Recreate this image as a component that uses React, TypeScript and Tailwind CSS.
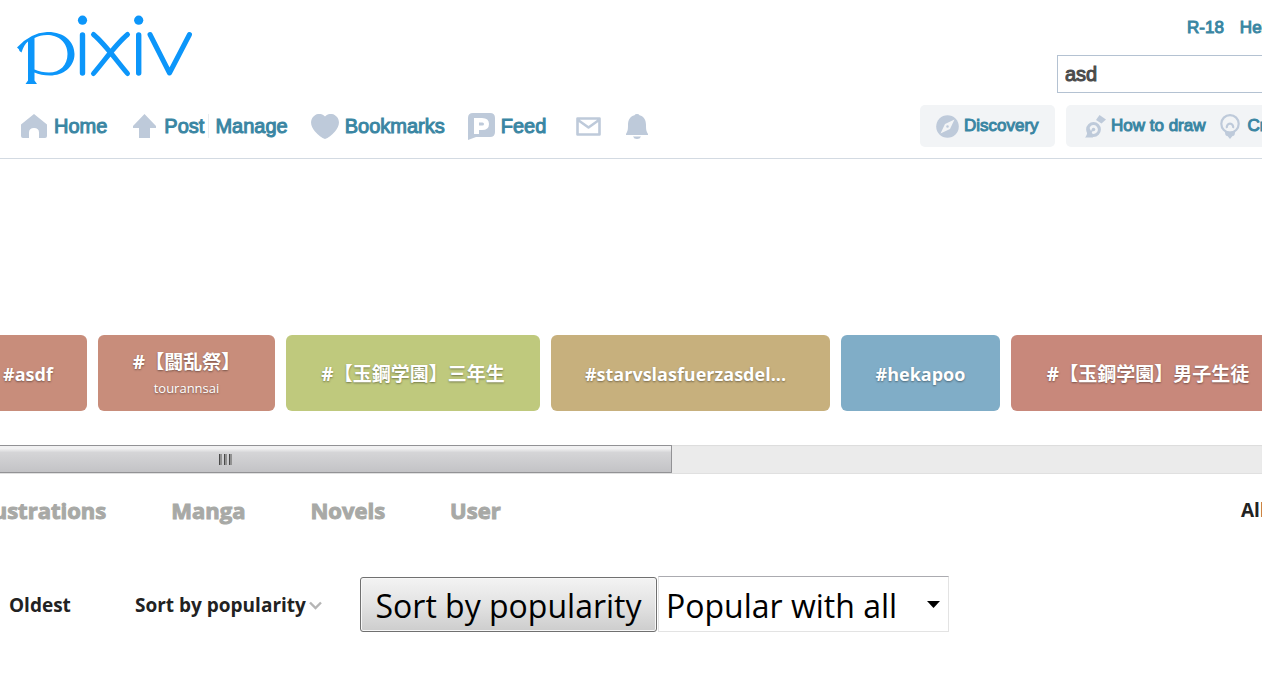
import { type ReactNode } from "react";

const uiFont = "font-['Liberation_Sans',Arial,sans-serif]";
const navLink = "flex items-center whitespace-nowrap text-[#3a86a3] [-webkit-text-stroke:1px_currentColor]";

const tags = [
  { label: "#asdf", box: "w-[118px] bg-[#c88d7b] text-[18px]" },
  { label: "#【闘乱祭】", sub: "tourannsai", box: "w-[177px] bg-[#c88d7b] text-[19px]" },
  { label: "#【玉鋼学園】三年生", box: "w-[254px] bg-[#bfc97d] text-[19px]" },
  { label: "#starvslasfuerzasdel...", box: "w-[279px] bg-[#c7b07d] pr-[10px] text-[18px]" },
  { label: "#hekapoo", box: "w-[159px] bg-[#80adc7] text-[18px]" },
  { label: "#【玉鋼学園】男子生徒", box: "w-[274px] bg-[#c8887b] text-[19px]" },
];

function Logo() {
  return (
    <svg className="block" width="176" height="70" viewBox="17 15 176 70" role="img" aria-label="pixiv">
      <g fill="#0c96fa" fillRule="evenodd">
        <path d="M17 47.500Q30 33 47 32C63 31.500 74.500 41 74.500 54C74.500 67 63 75.500 50 75.500C44 75.500 38.500 74.500 34.500 72.500V80.500L37 84H25.500L28 80.500V41.500Q24 44.500 21.500 52.500L19.500 51Q19.500 49 17 47.500ZM34.500 38V69.500Q41 72.500 49 72.500C60 72.500 67.500 65 67.500 54C67.500 42 58 35 47 35Q40 35 34.500 38Z" />
        <circle cx="82.500" cy="20.200" r="4.600" />
        <circle cx="138.700" cy="20.200" r="4.600" />
      </g>
      <g fill="none" stroke="#0c96fa" strokeWidth="5.400" strokeLinecap="round" strokeLinejoin="round">
        <path d="M82.500 35V73M138.700 35V73" />
        <path strokeWidth="5" d="M93.500 34.500C105 44 116 60 127.500 73.500M127.500 34.500C116 44 105 60 93.500 73.500" />
        <path strokeWidth="5" d="M150 34.500L169.500 73L189.500 34.500" />
      </g>
    </svg>
  );
}

function Icon({ w, h, children }: { w: number; h: number; children: ReactNode }) {
  return (
    <svg className="block shrink-0" width={w} height={h} viewBox={`0 0 ${w} ${h}`} fill="#becada" aria-hidden="true">
      {children}
    </svg>
  );
}

function Header() {
  return (
    <header className={`${uiFont} overflow-hidden border-b border-[#d3dae2] pb-[11px]`}>
      <div className="flex h-[105px] justify-between">
        <a href="#home" className="pt-[15px] pl-[17px]"><Logo /></a>
        <div className="w-[205px] shrink-0 pt-[17px]">
          <div className="flex gap-4 pl-[130px] text-[17px] leading-[22px]">
            <a href="#r18" className={navLink}>R-18</a>
            <a href="#help" className={navLink}>Help</a>
          </div>
          <input
            aria-label="Search"
            defaultValue="asd"
            className="mt-4 block h-[38px] w-[300px] border border-[#b4c2d2] bg-white px-[7px] text-[20px] text-[#4b4b4b] outline-none [-webkit-text-stroke:1px_currentColor]"
          />
        </div>
      </div>
      <div className="flex h-[42px] items-center justify-between">
        <nav aria-label="Main" className="flex items-center pl-[21px] text-[20px] leading-6">
          <a href="#home" className={`${navLink} mr-[26px] gap-[7px]`}>
            <Icon w={26} h={24}><path d="M13 0L26 10.500V22Q26 24 24 24H18V18.500Q18 14 13 14T8 18.500V24H2Q0 24 0 22V10.500Z" /></Icon>
            Home
          </a>
          <a href="#post" className={`${navLink} mr-1 gap-2`}>
            <Icon w={23} h={24}><path d="M11.500 0L23 12V14H17V24H6V14H0V12Z" /></Icon>
            Post
          </a>
          <a href="#manage" className={`${navLink} mr-[23px] border-l border-[#e9edf1] pl-[6px]`}>Manage</a>
          <a href="#bookmarks" className={`${navLink} mr-[23px] gap-[6px]`}>
            <Icon w={28} h={25}><path d="M14 2.500C18-1.500 23-.500 26 3C29.500 7.500 28 13 24 17.500C21 21 17 24 14 25C11 24 7 21 4 17.500C0 13-1.500 7.500 2 3C5-.500 10-1.500 14 2.500Z" /></Icon>
            Bookmarks
          </a>
          <a href="#feed" className={`${navLink} mr-[30px] gap-[6px]`}>
            <Icon w={27} h={28}>
              <path fillRule="evenodd" d="M5 1H22Q27 1 27 6V20Q27 25 22 25H8L0 28V6Q0 1 5 1ZM6 6V22H11V18H14Q21 18 21 12T14 6ZM11 10.500H14.500Q16 10.500 16 12T14.500 13.500H11Z" />
            </Icon>
            Feed
          </a>
          <a href="#messages" aria-label="Messages" className="mr-[25px]">
            <Icon w={25} h={19}>
              <path fill="none" stroke="#becada" strokeWidth="2.600" strokeLinejoin="round" d="M1.500 1.500H23.500V17.500H1.500ZM2 3L12.500 10.500L23 3" />
            </Icon>
          </a>
          <a href="#notifications" aria-label="Notifications">
            <Icon w={22} h={25}>
              <path d="M11 0Q13 0 13.500 1.300C18 2.500 20 6 20 11C20 16 20.500 17.500 22 20V21H0V20C1.500 17.500 2 16 2 11C2 6 4 2.500 8.500 1.300Q9 0 11 0ZM7 22.500H15Q14 25 11 25T7 22.500Z" />
            </Icon>
          </a>
        </nav>
        <div className="flex w-[342px] shrink-0 gap-[11px] text-[17px] leading-6 whitespace-nowrap">
          <a href="#discovery" className={`${navLink} h-[42px] w-[135px] shrink-0 gap-[5px] rounded-[5px] bg-[#f2f4f6] pl-4`}>
            <Icon w={23} h={23}>
              <circle cx="11.500" cy="11.500" r="11.300" />
              <path fill="#f2f4f6" fillRule="evenodd" d="M18.500 4.500L14 14L4.500 18.500L9 9ZM11.500 10.200A1.300 1.300 0 1 0 11.500 12.800A1.300 1.300 0 1 0 11.500 10.200Z" />
            </Icon>
            Discovery
          </a>
          <div className="flex h-[42px] w-[300px] shrink-0 gap-[15px] rounded-[5px] bg-[#f2f4f6] pl-[19px]">
            <a href="#how-to-draw" className={`${navLink} gap-[5px]`}>
              <Icon w={21} h={23}>
                <path d="M14.500 0L21 4.500L16.500 8.500L11 5Z" />
                <path d="M4 12C1.500 16 3 20 0 22.500H8L7 18Z" />
                <circle cx="8.500" cy="14.500" r="5.900" fill="none" stroke="#becada" strokeWidth="3" />
                <circle cx="8.500" cy="14.500" r="1.800" />
                <path d="M4 19.500L8 14.500" stroke="#becada" strokeWidth="1.500" />
              </Icon>
              How to draw
            </a>
            <a href="#creators" className={`${navLink} gap-[7px]`}>
              <Icon w={20} h={25}>
                <circle cx="10" cy="9.800" r="8.700" fill="none" stroke="#becada" strokeWidth="2.200" />
                <path fill="none" stroke="#becada" strokeWidth="2.200" d="M7 14A3.200 3.200 0 1 1 13 14" />
                <path d="M4.500 16.500Q10 19 15.500 16.500L14.500 21Q14 22 12.500 22L10 25L7.500 22Q6 22 5.500 21Z" />
              </Icon>
              Creators
            </a>
          </div>
        </div>
      </div>
    </header>
  );
}

function ScrollBar() {
  return (
    <div className="mt-[34px] flex h-[29px] border-b border-[#e0e0e0] bg-[#ebebeb] shadow-[inset_0_1px_1px_#dcdcdc]">
      <div className="flex w-[672px] items-center rounded-r-[1px] border border-l-0 border-[#929295] bg-linear-to-b from-[#f1f1f2] from-10% via-[#d5d5d7] via-25% to-[#c3c3c6]">
        <div className="ml-[219px] flex gap-[2px]">
          <span className="h-[11px] w-[3px] border-l border-[#4a4a4a] bg-[#929292]" />
          <span className="h-[11px] w-[3px] border-l border-[#4a4a4a] bg-[#929292]" />
          <span className="h-[11px] w-[3px] border-l border-[#4a4a4a] bg-[#929292]" />
        </div>
      </div>
    </div>
  );
}

export default function App() {
  return (
    <div className="overflow-hidden bg-white pb-12 font-['Open_Sans','Noto_Sans_CJK_JP',sans-serif]">
      <Header />
      <main className="pt-44">
        <div className="-ml-[31px] flex gap-[11px] text-white">
          {tags.map((tag) => (
            <a
              key={tag.label}
              href="#tag"
              className={`${tag.box} flex h-[76px] shrink-0 flex-col items-center justify-center rounded-[6px] pt-[2px] whitespace-nowrap [text-shadow:0_1px_2px_rgba(0,0,0,0.4)]`}
            >
              <span className="leading-7 font-bold">{tag.label}</span>
              {tag.sub && <span className="text-[13px] leading-6">{tag.sub}</span>}
            </a>
          ))}
        </div>
        <ScrollBar />
        <div className="flex justify-between pt-5 leading-8 font-bold whitespace-nowrap">
          <nav aria-label="Categories" className="-ml-7 flex gap-[65px] text-[22px] text-[#a8a9a6] [-webkit-text-stroke:1px_currentColor]">
            <a href="#illustrations">Illustrations</a>
            <a href="#manga">Manga</a>
            <a href="#novels">Novels</a>
            <a href="#user">User</a>
          </nav>
          <a href="#all" className="w-[21px] shrink-0 text-[19px] text-[#222]">All</a>
        </div>
        <div className="mt-[50px] flex items-center pl-[9px] whitespace-nowrap text-[#222]">
          <a href="#oldest" className="w-[126px] pt-[2px] text-[19px] font-bold">Oldest</a>
          <button type="button" className="flex w-[225px] items-center gap-[3px] pt-[2px] text-[19px] font-bold">
            Sort by popularity
            <svg width="13" height="9" viewBox="0 0 13 9" fill="none" stroke="#b5b5b5" strokeWidth="2.400" aria-hidden="true">
              <path d="M1 1.500L6.500 7L12 1.500" />
            </svg>
          </button>
          <button type="button" className="mr-px h-[55px] w-[297px] rounded-[3px] border border-[#707070] bg-linear-to-b from-[#f3f3f3] via-[#e3e3e3] to-[#cdcdcd] pt-[2px] text-[32px] leading-[51px] text-black shadow-[inset_0_0_0_1px_#f7f7f7]">
            Sort by popularity
          </button>
          <div className="relative w-[291px]">
            <select aria-label="Popularity filter" className="block h-14 w-full appearance-none border border-[#e3e3e3] border-t-[#ababb0] bg-white pt-[3px] pl-[7px] text-[32px] text-black">
              <option>Popular with all</option>
            </select>
            <svg className="pointer-events-none absolute top-[25px] right-[9px]" width="13" height="7" viewBox="0 0 13 7" aria-hidden="true">
              <path d="M0 0H13L6.500 7Z" />
            </svg>
          </div>
        </div>
      </main>
    </div>
  );
}
